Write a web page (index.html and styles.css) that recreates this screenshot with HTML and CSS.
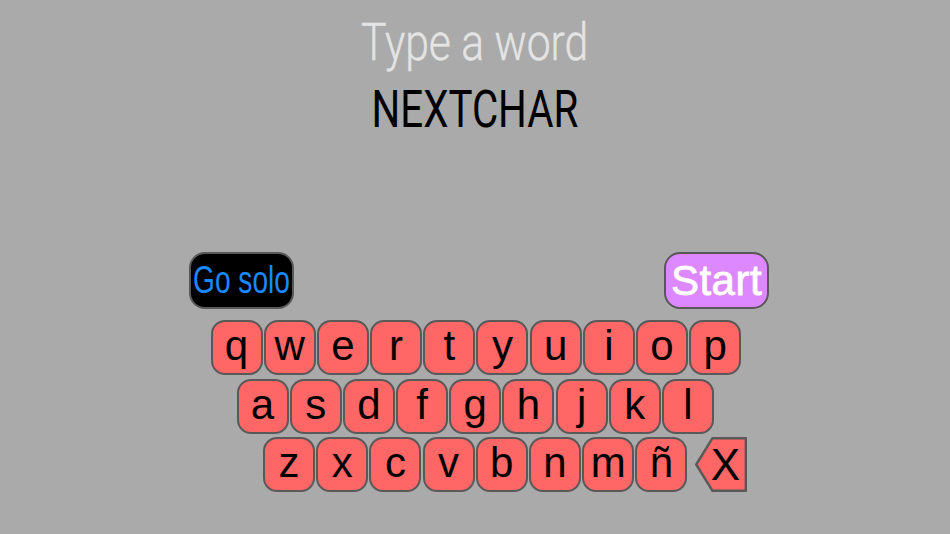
FILE: index.html
```html
<!DOCTYPE html>
<html>
<head>
<meta charset="utf-8">
<link rel="stylesheet" href="styles.css">
</head>
<body>
<div class="screen">
  <div class="header">
    <div class="title"><span class="squeeze-title">Type a word</span></div>
    <div class="word"><span class="squeeze-word">NEXTCHAR</span></div>
  </div>
  <div class="board">
    <div class="actions">
      <button class="btn solo"><span class="solo-text">Go solo</span></button>
      <button class="btn start">Start</button>
    </div>
    <div class="row row1">
      <div class="key">q</div><div class="key">w</div><div class="key">e</div><div class="key">r</div><div class="key">t</div><div class="key">y</div><div class="key">u</div><div class="key">i</div><div class="key">o</div><div class="key">p</div>
    </div>
    <div class="row row2">
      <div class="key">a</div><div class="key">s</div><div class="key">d</div><div class="key">f</div><div class="key">g</div><div class="key">h</div><div class="key">j</div><div class="key">k</div><div class="key">l</div>
    </div>
    <div class="row row3">
      <div class="key">z</div><div class="key">x</div><div class="key">c</div><div class="key">v</div><div class="key">b</div><div class="key">n</div><div class="key">m</div><div class="key">ñ</div>
      <div class="del">
        <svg class="del-shape" width="52" height="55" viewBox="0 0 52 55"><polygon points="1.2,27.5 17.5,1.2 50.8,1.2 50.8,53.8 17.5,53.8" fill="#ff6666" stroke="#595959" stroke-width="2.4" stroke-linejoin="round"/></svg>
        <span class="del-label">X</span>
      </div>
    </div>
  </div>
</div>
</body>
</html>
```

FILE: styles.css
```css
html, body {
  margin: 0;
  padding: 0;
  background: #aaaaaa;
}

.screen {
  width: 950px;
  height: 534px;
  overflow: hidden;
  display: flex;
  flex-direction: column;
}

.header {
  display: flex;
  flex-direction: column;
  align-items: center;
  padding-top: 17px;
}

.title {
  font-family: Roboto, "Liberation Sans", sans-serif;
  font-weight: 300;
  font-size: 52px;
  line-height: 52px;
  color: #e4e4e4;
  -webkit-text-stroke: 0.4px #e4e4e4;
}

.squeeze-title {
  display: inline-block;
  transform: scaleX(0.82);
}

.word {
  margin-top: 15px;
  font-family: Roboto, "Liberation Sans", sans-serif;
  font-weight: 400;
  font-size: 51px;
  line-height: 51px;
  color: #000;
}

.squeeze-word {
  display: inline-block;
  transform: scaleX(0.79);
}

.board {
  margin-top: 117px;
  margin-left: 189px;
  width: 580px;
  display: flex;
  flex-direction: column;
}

.actions {
  display: flex;
  justify-content: space-between;
  height: 57px;
}

.btn {
  box-sizing: border-box;
  width: 105px;
  height: 57px;
  border: 2.5px solid #585858;
  border-radius: 16px;
  padding: 0;
  display: flex;
  align-items: center;
  justify-content: center;
  font-family: "Liberation Sans", Arial, sans-serif;
  overflow: visible;
  white-space: nowrap;
}

.solo {
  background: #000;
  color: #1a88ff;
  font-size: 38px;
}

.solo-text {
  display: inline-block;
  transform: scaleX(0.74);
}

.start {
  background: #dd88ff;
  color: #fff;
  font-size: 42px;
  letter-spacing: 0.5px;
  -webkit-text-stroke: 0.8px #fff;
}

.row {
  display: flex;
  gap: 1.2px;
  height: 55px;
  align-items: center;
}

.row1 { margin-top: 11px; padding-left: 21.5px; }
.row2 { margin-top: 3.5px; padding-left: 47.5px; }
.row3 { margin-top: 3.5px; padding-left: 74px; }

.key {
  box-sizing: border-box;
  width: 52px;
  height: 55px;
  background: #ff6666;
  border: 2.5px solid #595959;
  border-radius: 14px;
  display: flex;
  align-items: center;
  justify-content: center;
  font-family: "Liberation Sans", Arial, sans-serif;
  font-size: 42px;
  line-height: 1;
  color: #000;
  padding-bottom: 3px;
}

.del {
  position: relative;
  margin-left: 6.5px;
  width: 52px;
  height: 55px;
  display: flex;
  align-items: center;
  justify-content: center;
}

.del-shape {
  position: absolute;
  left: 0;
  top: 0;
}

.del-label {
  position: relative;
  padding-left: 9px;
  font-family: "Liberation Sans", Arial, sans-serif;
  font-size: 44px;
  line-height: 1;
  color: #000;
}
```
